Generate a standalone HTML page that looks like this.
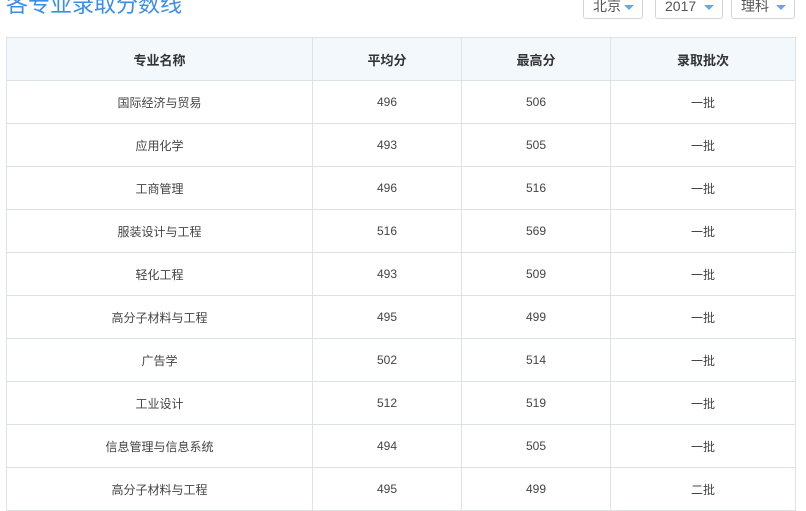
<!DOCTYPE html>
<html><head><meta charset="utf-8"><style>
body{margin:0;width:806px;height:504px;overflow:hidden;background:#fff;font-family:"Liberation Sans","Noto Sans CJK SC",sans-serif;position:relative}
.t{position:absolute;left:6px;top:-10px;font-size:22px;color:#3a8ee6;line-height:30px}
.dd{position:absolute;top:-8px;height:27px;border:1px solid #d4d4d4;border-radius:3px;font-size:14px;color:#555;line-height:26px;box-sizing:border-box;padding-left:9px}
.dd:after{content:"";position:absolute;right:8px;top:12px;border:5px solid transparent;border-top:5px solid #6aa6e0;border-bottom:0}
table{position:absolute;left:6px;top:37px;width:790px;border-collapse:collapse;font-size:12px;color:#444}
td,th{border:1px solid #dde2e8;text-align:center;height:42px;padding:0}
th{background:#f3f8fd;font-weight:bold;color:#333;font-size:13px}
</style></head><body>
<div class="t">各专业录取分数线</div>
<div class="dd" style="left:583px;width:60px">北京</div>
<div class="dd" style="left:655px;width:68px">2017</div>
<div class="dd" style="left:731px;width:64px">理科</div>
<table>
<tr><th style="width:305px">专业名称</th><th style="width:148px">平均分</th><th style="width:148px">最高分</th><th>录取批次</th></tr>
<tr><td>国际经济与贸易</td><td>496</td><td>506</td><td>一批</td></tr>
<tr><td>应用化学</td><td>493</td><td>505</td><td>一批</td></tr>
<tr><td>工商管理</td><td>496</td><td>516</td><td>一批</td></tr>
<tr><td>服装设计与工程</td><td>516</td><td>569</td><td>一批</td></tr>
<tr><td>轻化工程</td><td>493</td><td>509</td><td>一批</td></tr>
<tr><td>高分子材料与工程</td><td>495</td><td>499</td><td>一批</td></tr>
<tr><td>广告学</td><td>502</td><td>514</td><td>一批</td></tr>
<tr><td>工业设计</td><td>512</td><td>519</td><td>一批</td></tr>
<tr><td>信息管理与信息系统</td><td>494</td><td>505</td><td>一批</td></tr>
<tr><td>高分子材料与工程</td><td>495</td><td>499</td><td>二批</td></tr>
</table>
</body></html>
